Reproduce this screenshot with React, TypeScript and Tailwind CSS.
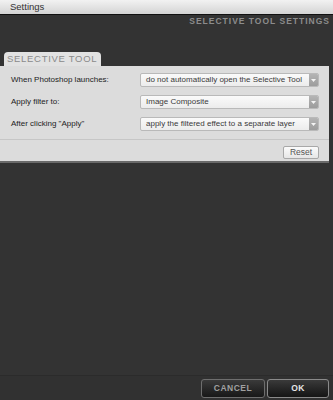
import React from 'react';

const rows = [
  { label: 'When Photoshop launches:', value: 'do not automatically open the Selective Tool' },
  { label: 'Apply filter to:', value: 'Image Composite' },
  { label: 'After clicking "Apply"', value: 'apply the filtered effect to a separate layer' },
];

const Select: React.FC<{ value: string }> = ({ value }) => (
  <div className="flex h-[14px] w-[179px] items-stretch overflow-hidden rounded-[2px] border border-[#b9b9b9] bg-gradient-to-b from-[#fafafa] to-[#ececec]">
    <div className="flex flex-1 items-center whitespace-nowrap pl-[5px] text-[8px] text-[#3a3a3a]">{value}</div>
    <div className="flex w-[9px] items-center justify-center bg-gradient-to-b from-[#b4b4b4] to-[#9c9c9c]">
      <svg width="5" height="3" viewBox="0 0 5 3">
        <path d="M0 0h5L2.5 3z" fill="#f4f4f4" />
      </svg>
    </div>
  </div>
);

const App: React.FC = () => {
  return (
    <div className="flex h-[400px] w-[333px] flex-col bg-[#333333] font-['Liberation_Sans',Arial,sans-serif]">
      <div className="flex h-[15px] items-center border-b border-[#111] bg-gradient-to-b from-[#f2f2f2] to-[#d4d4d4] pl-[10px] text-[9.5px] text-[#333]">
        Settings
      </div>

      <div className="flex h-[11px] items-center justify-end pr-[3px] pt-[2px] text-[8.5px] font-bold tracking-[1px] text-[#8c8c8c]">
        SELECTIVE TOOL SETTINGS
      </div>

      <div className="mt-[26px] pl-[4px]">
        <div className="flex h-[14px] w-[97px] items-center whitespace-nowrap rounded-t-[4px] bg-[#e2e2e2] pl-[3px] text-[9.5px] tracking-[0.7px] text-[#8a8a8a]">
          SELECTIVE TOOL
        </div>
      </div>

      <div className="mr-[4px] border-b-[2px] border-[#6a6a6a] bg-[#dcdcdc]">
        <div className="flex flex-col gap-[8px] pt-[7px]">
          {rows.map((r) => (
            <div key={r.label} className="flex items-center">
              <div className="w-[140px] pl-[11px] text-[8px] text-[#222]">{r.label}</div>
              <Select value={r.value} />
            </div>
          ))}
        </div>
        <div className="mt-[8px] border-t border-[#c6c6c6]" />
        <div className="flex justify-end pb-[2px] pr-[10px] pt-[6px]">
          <div className="flex h-[13px] w-[36px] items-center justify-center rounded-[2px] border border-[#a8a8a8] bg-gradient-to-b from-[#fbfbfb] to-[#e6e6e6] text-[8.5px] text-[#555]">
            Reset
          </div>
        </div>
      </div>

      <div className="flex-1" />

      <div className="border-t border-[#2b2b2b] bg-[#313131] pb-[2px] pt-[3px]">
        <div className="flex justify-end gap-[2px] pr-[4px]">
          <div className="flex h-[19px] w-[64px] items-center justify-center rounded-[3px] border border-[#6e6e6e] bg-gradient-to-b from-[#3a3a3a] to-[#181818] text-[8.5px] font-bold tracking-[0.5px] text-[#a0a0a0]">
            CANCEL
          </div>
          <div className="flex h-[19px] w-[62px] items-center justify-center rounded-[3px] border border-[#8a8a8a] bg-gradient-to-b from-[#3a3a3a] to-[#151515] text-[8.5px] font-bold tracking-[0.5px] text-[#e6e6e6]">
            OK
          </div>
        </div>
      </div>
    </div>
  );
};

export default App;
